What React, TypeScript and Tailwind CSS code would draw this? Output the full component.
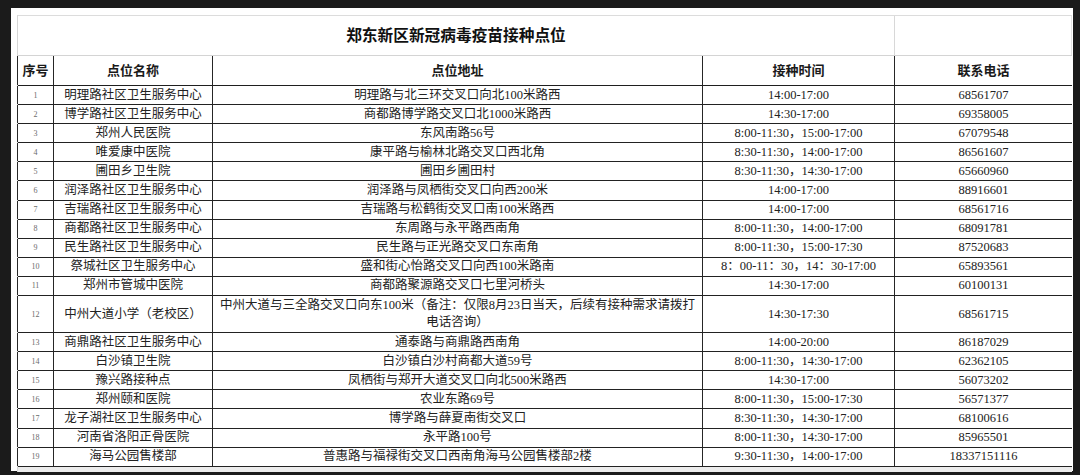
type Site = {
  no: number;
  name: string;
  address: string;
  time: string;
  phone: string;
  tall?: boolean;
};

const sites: Site[] = [
  { no: 1, name: "明理路社区卫生服务中心", address: "明理路与北三环交叉口向北100米路西", time: "14:00-17:00", phone: "68561707" },
  { no: 2, name: "博学路社区卫生服务中心", address: "商都路博学路交叉口北1000米路西", time: "14:30-17:00", phone: "69358005" },
  { no: 3, name: "郑州人民医院", address: "东风南路56号", time: "8:00-11:30，15:00-17:00", phone: "67079548" },
  { no: 4, name: "唯爱康中医院", address: "康平路与榆林北路交叉口西北角", time: "8:30-11:30，14:00-17:00", phone: "86561607" },
  { no: 5, name: "圃田乡卫生院", address: "圃田乡圃田村", time: "8:30-11:30，14:30-17:00", phone: "65660960" },
  { no: 6, name: "润泽路社区卫生服务中心", address: "润泽路与凤栖街交叉口向西200米", time: "14:00-17:00", phone: "88916601" },
  { no: 7, name: "吉瑞路社区卫生服务中心", address: "吉瑞路与松鹤街交叉口南100米路西", time: "14:00-17:00", phone: "68561716" },
  { no: 8, name: "商都路社区卫生服务中心", address: "东周路与永平路西南角", time: "8:00-11:30，14:00-17:00", phone: "68091781" },
  { no: 9, name: "民生路社区卫生服务中心", address: "民生路与正光路交叉口东南角", time: "8:00-11:30，15:00-17:30", phone: "87520683" },
  { no: 10, name: "祭城社区卫生服务中心", address: "盛和街心怡路交叉口向西100米路南", time: "8：00-11：30，14：30-17:00", phone: "65893561" },
  { no: 11, name: "郑州市管城中医院", address: "商都路聚源路交叉口七里河桥头", time: "14:30-17:00", phone: "60100131" },
  {
    no: 12,
    name: "中州大道小学（老校区）",
    address: "中州大道与三全路交叉口向东100米（备注：仅限8月23日当天，后续有接种需求请拨打电话咨询）",
    time: "14:30-17:30",
    phone: "68561715",
    tall: true,
  },
  { no: 13, name: "商鼎路社区卫生服务中心", address: "通泰路与商鼎路西南角", time: "14:00-20:00", phone: "86187029" },
  { no: 14, name: "白沙镇卫生院", address: "白沙镇白沙村商都大道59号", time: "8:00-11:30，14:30-17:00", phone: "62362105" },
  { no: 15, name: "豫兴路接种点", address: "凤栖街与郑开大道交叉口向北500米路西", time: "14:30-17:00", phone: "56073202" },
  { no: 16, name: "郑州颐和医院", address: "农业东路69号", time: "8:00-11:30，15:00-17:30", phone: "56571377" },
  { no: 17, name: "龙子湖社区卫生服务中心", address: "博学路与薛夏南街交叉口", time: "8:30-11:30，14:30-17:00", phone: "68100616" },
  { no: 18, name: "河南省洛阳正骨医院", address: "永平路100号", time: "8:00-11:30，14:30-17:00", phone: "85965501" },
  { no: 19, name: "海马公园售楼部", address: "普惠路与福禄街交叉口西南角海马公园售楼部2楼", time: "9:30-11:30，14:00-17:00", phone: "18337151116" },
];

const cols = "grid grid-cols-[36px_159px_490px_192px_177px]";
const cell = "flex items-center justify-center border-r border-[#262626] text-center";

export default function App() {
  return (
    <div
      className="h-[475px] w-[1080px] overflow-hidden bg-[#1b1b1b] pl-[11px] pt-[8px]"
      style={{ fontFamily: '"Liberation Serif", "Noto Sans CJK SC", serif' }}
    >
      <div className="h-[463px] w-[1062px] bg-white pl-[6px] pt-[7px]">
        <div className="w-[1055px] border-l border-[#d6d6d6]">
          {/* title row */}
          <div className={`${cols} h-[40px] border-t border-[#dcdcdc]`}>
            <div className="col-span-4 flex items-center justify-center border-r border-[#d8d8d8] text-[15.7px] font-bold text-[#111]">
              郑东新区新冠病毒疫苗接种点位
            </div>
            <div className="border-r border-[#e2e2e2]" />
          </div>

          {/* header */}
          <div className={`${cols} h-[31px] border-t border-[#d4d4d4] border-b border-b-[#1f1f1f] text-[13px] font-bold text-[#1a1a1a]`}>
            <div className={`${cell} border-l border-l-[#262626] -ml-px`}>序号</div>
            <div className={cell}>点位名称</div>
            <div className={cell}>点位地址</div>
            <div className={cell}>接种时间</div>
            <div className="flex items-center justify-center">联系电话</div>
          </div>

          {sites.map((s) => (
            <div
              key={s.no}
              className={`${cols} ${s.tall ? "h-[37px]" : "h-[19.1px]"} border-b border-[#222] text-[12.5px] leading-[17px] text-[#222]`}
            >
              <div className={`${cell} -ml-px border-l border-l-[#262626] text-[8px] text-[#6b6b6b]`}>{s.no}</div>
              <div className={cell}>{s.name}</div>
              <div className={`${cell} px-[3px]`}>{s.address}</div>
              <div className={cell}>{s.time}</div>
              <div className="flex items-center justify-center">{s.phone}</div>
            </div>
          ))}
          <div className="h-[5px] bg-[#ececec]" />
        </div>
      </div>
    </div>
  );
}
